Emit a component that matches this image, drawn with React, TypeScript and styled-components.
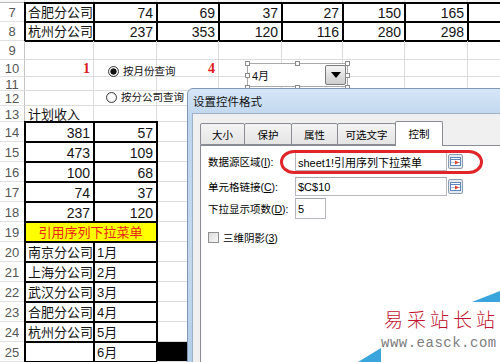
import React from "react";
import styled, { createGlobalStyle } from "styled-components";

const GlobalStyle = createGlobalStyle`
  html, body {
    margin: 0;
    padding: 0;
    background: #fff;
    overflow: hidden;
  }
`;

type Align = "left" | "right" | "center";
type CellSpec = {
  text?: string;
  align?: Align;
  boxed?: boolean;
  span?: number;
  fill?: string;
  tone?: "red" | "mark";
  num?: boolean;
};
type RowSpec = { n: number; h: number; cells: CellSpec[] };

const COLS = [25, 69, 63, 62, 63, 61, 62, 63, 62];

const num = (text: string): CellSpec => ({ text, align: "right", boxed: true, num: true });
const box = (text = ""): CellSpec => ({ text, boxed: true });
const blanks = (count: number): CellSpec[] => Array.from({ length: count }, () => ({}));

const ROWS: RowSpec[] = [
  { n: 7, h: 19, cells: [box("合肥分公司"), num("74"), num("69"), num("37"), num("27"), num("150"), num("165"), box()] },
  { n: 8, h: 19, cells: [box("杭州分公司"), num("237"), num("353"), num("120"), num("116"), num("280"), num("298"), box()] },
  { n: 9, h: 19, cells: blanks(8) },
  {
    n: 10,
    h: 17,
    cells: [
      { text: "1", align: "right", tone: "mark" },
      {},
      { text: "4", align: "right", tone: "mark" },
      ...blanks(5),
    ],
  },
  { n: 11, h: 14, cells: blanks(8) },
  { n: 12, h: 15, cells: blanks(8) },
  { n: 13, h: 16, cells: [{ text: "计划收入" }, ...blanks(7)] },
  { n: 14, h: 20, cells: [num("381"), num("57"), ...blanks(6)] },
  { n: 15, h: 20, cells: [num("473"), num("109"), ...blanks(6)] },
  { n: 16, h: 20, cells: [num("100"), num("68"), ...blanks(6)] },
  { n: 17, h: 20, cells: [num("74"), num("37"), ...blanks(6)] },
  { n: 18, h: 20, cells: [num("237"), num("120"), ...blanks(6)] },
  {
    n: 19,
    h: 20,
    cells: [
      { text: "引用序列下拉菜单", span: 2, boxed: true, fill: "#ffff00", tone: "red", align: "center" },
      ...blanks(6),
    ],
  },
  { n: 20, h: 20, cells: [box("南京分公司"), box("1月"), ...blanks(6)] },
  { n: 21, h: 20, cells: [box("上海分公司"), box("2月"), ...blanks(6)] },
  { n: 22, h: 20, cells: [box("武汉分公司"), box("3月"), ...blanks(6)] },
  { n: 23, h: 20, cells: [box("合肥分公司"), box("4月"), ...blanks(6)] },
  { n: 24, h: 20, cells: [box("杭州分公司"), box("5月"), ...blanks(6)] },
  { n: 25, h: 20, cells: [box(), box("6月"), { fill: "#000" }, ...blanks(5)] },
];

const Page = styled.div`
  position: relative;
  width: 500px;
  height: 362px;
  overflow: hidden;
  background: #fff;
`;

const Sheet = styled.div`
  display: grid;
  grid-template-columns: ${COLS.map((w) => `${w}px`).join(" ")};
  grid-template-rows: 3px ${ROWS.map((r) => `${r.h}px`).join(" ")};
  font-family: "Liberation Sans", "Noto Sans CJK SC", sans-serif;
`;

/* only the bottom edge of the column header strip is still on screen */
const ColHead = styled.div`
  border-right: 1px solid #dadcdd;
  border-bottom: 1px solid #b9b9b9;
  background: #f7f7f7;
`;

const RowHead = styled.div`
  display: flex;
  justify-content: center;
  align-items: center;
  padding-top: 1px;
  border-right: 1px solid #c4c4c4;
  border-bottom: 1px solid #e1e1e1;
  font-size: 13px;
  color: #555;
`;

const Cell = styled.div<{
  $align?: Align;
  $boxed?: boolean;
  $fill?: string;
  $span?: number;
  $tone?: "red" | "mark";
  $num?: boolean;
}>`
  grid-column: span ${(p) => p.$span ?? 1};
  display: flex;
  align-items: center;
  justify-content: ${(p) =>
    p.$align === "right" ? "flex-end" : p.$align === "center" ? "center" : "flex-start"};
  padding: 2px 3px 0 3px;
  border-right: 1px solid #dadcdd;
  border-bottom: 1px solid #dadcdd;
  background: ${(p) => p.$fill ?? "transparent"};
  outline: ${(p) => (p.$boxed ? "2px solid #000" : "none")};
  outline-offset: -1px;
  white-space: nowrap;
  line-height: 16px;
  font-size: ${(p) => (p.$num ? "14px" : "13px")};
  color: ${(p) => (p.$tone ? "#e8221b" : "#141414")};
  ${(p) =>
    p.$tone === "mark" &&
    `font-family: "Liberation Serif", serif; font-weight: 700; font-size: 14px; color: #e0191b;`}
`;

const Radio = styled.div<{ $x: number; $y: number }>`
  position: absolute;
  left: ${(p) => p.$x}px;
  top: ${(p) => p.$y}px;
  display: flex;
  align-items: center;
  gap: 4px;
  font-family: "Noto Sans CJK SC", sans-serif;
  font-size: 10.5px;
  line-height: 12px;
  color: #111;
`;

const RadioDot = styled.span<{ $on?: boolean }>`
  width: 11px;
  height: 11px;
  box-sizing: border-box;
  border-radius: 50%;
  border: 1px solid #3a3a3a;
  background: ${(p) =>
    p.$on
      ? "radial-gradient(circle, #111 0 2.8px, #f4f4f4 3.4px, #dcdcdc 100%)"
      : "radial-gradient(circle, #fff 0, #fff 40%, #e2e2e2 100%)"};
`;

const Combo = styled.div`
  position: absolute;
  left: 247px;
  top: 63px;
  width: 101px;
  height: 24px;
  box-sizing: border-box;
  display: flex;
  align-items: center;
  border: 1px solid #a9a9a9;
  background: #fff;
  font-family: "Liberation Sans", "Noto Sans CJK SC", sans-serif;
  font-size: 11px;
`;

const ComboText = styled.span`
  flex: 1;
  padding-left: 4px;
  color: #111;
`;

const DropButton = styled.span`
  width: 21px;
  height: 20px;
  margin-right: 1px;
  box-sizing: border-box;
  display: flex;
  align-items: center;
  justify-content: center;
  border: 1px solid #7b7b7b;
  border-radius: 2px;
  background: linear-gradient(#f6f6f6, #dedede 55%, #cfcfcf);
`;

const Triangle = styled.span`
  width: 0;
  height: 0;
  border-left: 5px solid transparent;
  border-right: 5px solid transparent;
  border-top: 6px solid #000;
`;

const Handle = styled.span<{ $x: number; $y: number }>`
  position: absolute;
  left: ${(p) => p.$x}px;
  top: ${(p) => p.$y}px;
  width: 5px;
  height: 5px;
  box-sizing: border-box;
  border: 1px solid #8a8a8a;
  background: #fff;
`;

const Dialog = styled.div`
  position: absolute;
  left: 187px;
  top: 88px;
  width: 340px;
  height: 300px;
  box-sizing: border-box;
  display: flex;
  flex-direction: column;
  padding-left: 4px;
  border: 1px solid #7f97b5;
  border-radius: 6px 0 0 0;
  background: linear-gradient(180deg, #d6e6f7 0, #bed5ee 30px, #c3d8ef 60%, #aecbe8 100%);
  font-family: "Liberation Sans", "Noto Sans CJK SC", sans-serif;
  font-size: 11px;
  color: #000;
`;

const TitleBar = styled.div`
  height: 24px;
  display: flex;
  align-items: center;
  padding-left: 1px;
  font-size: 11.5px;
  color: #111;
`;

const Client = styled.div`
  flex: 1;
  display: flex;
  flex-direction: column;
  padding: 7px 0 0 7px;
  border-top: 1px solid #9fb1c7;
  border-left: 1px solid #9fb1c7;
  background: #f0f0f0;
`;

const TabStrip = styled.div`
  display: flex;
  align-items: flex-end;
  height: 24px;
  padding-left: 1px;
  position: relative;
  z-index: 1;
`;

const Tab = styled.div<{ $w: number; $active?: boolean }>`
  width: ${(p) => p.$w}px;
  height: ${(p) => (p.$active ? 25 : 22)}px;
  box-sizing: border-box;
  margin-left: -1px;
  margin-bottom: ${(p) => (p.$active ? -1 : 0)}px;
  display: flex;
  align-items: center;
  justify-content: center;
  padding-bottom: ${(p) => (p.$active ? 2 : 0)}px;
  border: 1px solid #898c95;
  border-bottom: ${(p) => (p.$active ? "none" : "1px solid #898c95")};
  border-radius: 2px 2px 0 0;
  background: ${(p) => (p.$active ? "#fff" : "linear-gradient(#f4f4f4, #e4e4e4)")};
  font-size: 10.5px;
`;

const Panel = styled.div`
  flex: 1;
  position: relative;
  display: flex;
  flex-direction: column;
  padding: 6px 0 0 7px;
  border: 1px solid #898c95;
  background: #fff;
`;

const FieldRow = styled.div<{ $h: number; $gap: number }>`
  display: flex;
  align-items: center;
  height: ${(p) => p.$h}px;
  margin-top: ${(p) => p.$gap}px;
`;

const FieldLabel = styled.span`
  width: 87px;
  font-size: 10.5px;
  white-space: nowrap;
`;

const Input = styled.div<{ $w: number }>`
  width: ${(p) => p.$w}px;
  height: 100%;
  box-sizing: border-box;
  display: flex;
  align-items: center;
  padding-left: 2px;
  border: 1px solid #b5b8c0;
  border-top-color: #a3a6ae;
  font-size: 11px;
  white-space: nowrap;
`;

const RangeButton = styled.svg`
  margin-left: 1px;
  flex: none;
`;

const CheckRow = styled.div`
  display: flex;
  align-items: center;
  gap: 4px;
  margin-top: 11px;
  font-size: 10.5px;
`;

const CheckBox = styled.span`
  width: 11px;
  height: 11px;
  box-sizing: border-box;
  border: 1px solid #8e8f8f;
  background: linear-gradient(135deg, #dcdcdc, #f7f7f7);
`;

const Callout = styled.div`
  position: absolute;
  left: 79px;
  top: 4px;
  width: 203px;
  height: 24px;
  box-sizing: border-box;
  border: 3px solid #e0242a;
  border-radius: 14px / 12px;
`;

const Watermark = styled.div`
  position: absolute;
  left: 356px;
  top: 286px;
  width: 144px;
  height: 76px;
`;

const WatermarkArt = styled.svg`
  position: absolute;
  inset: 0;
`;

const WatermarkText = styled.div`
  position: relative;
  display: flex;
  flex-direction: column;
  padding: 21px 0 0 28px;
`;

const BrandName = styled.span`
  font-family: "Noto Sans CJK SC", sans-serif;
  font-weight: 300;
  font-size: 19px;
  line-height: 24px;
  letter-spacing: 4px;
  color: #c3142f;
`;

const BrandUrl = styled.span`
  margin: 5px 0 0 -3px;
  font-family: "Liberation Mono", monospace;
  font-size: 14px;
  line-height: 14px;
  letter-spacing: 0.5px;
  color: #7d7d7d;
`;

const RangeIcon = () => (
  <RangeButton width="15" height="15" viewBox="0 0 15 15">
    <rect x="0.5" y="0.5" width="14" height="14" rx="1.5" fill="#e3e9f1" stroke="#8e9cae" />
    <rect x="2.5" y="3.5" width="10" height="8" fill="#fff" stroke="#5d86bd" />
    <line x1="3" y1="5.5" x2="12" y2="5.5" stroke="#5d86bd" />
    <line x1="3" y1="8.5" x2="12" y2="8.5" stroke="#a9c0df" />
    <polygon points="7,6.5 11,8.5 7,10.5" fill="#e0412a" />
  </RangeButton>
);

const TABS = [
  { label: "大小", w: 45 },
  { label: "保护", w: 48 },
  { label: "属性", w: 47 },
  { label: "可选文字", w: 59 },
  { label: "控制", w: 48, active: true },
];

const HANDLES = [
  [-3, -3],
  [47, -3],
  [97, -3],
  [-3, 9],
  [97, 9],
  [-3, 21],
  [47, 21],
  [97, 21],
];

export default function App() {
  return (
    <Page>
      <GlobalStyle />
      <Sheet>
        {COLS.map((_, i) => (
          <ColHead key={`h${i}`} />
        ))}
        {ROWS.map((row) => (
          <React.Fragment key={row.n}>
            <RowHead>{row.n}</RowHead>
            {row.cells.map((c, i) => (
              <Cell
                key={i}
                $align={c.align}
                $boxed={c.boxed}
                $fill={c.fill}
                $span={c.span}
                $tone={c.tone}
                $num={c.num}
              >
                {c.text}
              </Cell>
            ))}
          </React.Fragment>
        ))}
      </Sheet>

      <Radio $x={108} $y={65}>
        <RadioDot $on />
        按月份查询
      </Radio>
      <Radio $x={106} $y={91}>
        <RadioDot />
        按分公司查询
      </Radio>

      <Combo>
        <ComboText>4月</ComboText>
        <DropButton>
          <Triangle />
        </DropButton>
        {HANDLES.map(([x, y], i) => (
          <Handle key={i} $x={x} $y={y} />
        ))}
      </Combo>

      <Dialog>
        <TitleBar>设置控件格式</TitleBar>
        <Client>
          <TabStrip>
            {TABS.map((t) => (
              <Tab key={t.label} $w={t.w} $active={t.active}>
                {t.label}
              </Tab>
            ))}
          </TabStrip>
          <Panel>
            <FieldRow $h={19} $gap={0}>
              <FieldLabel>
                数据源区域(<u>I</u>):
              </FieldLabel>
              <Input $w={152}>sheet1!引用序列下拉菜单</Input>
              <RangeIcon />
            </FieldRow>
            <FieldRow $h={19} $gap={6}>
              <FieldLabel>
                单元格链接(<u>C</u>):
              </FieldLabel>
              <Input $w={152}>$C$10</Input>
              <RangeIcon />
            </FieldRow>
            <FieldRow $h={21} $gap={2}>
              <FieldLabel>
                下拉显示项数(<u>D</u>):
              </FieldLabel>
              <Input $w={31}>5</Input>
            </FieldRow>
            <CheckRow>
              <CheckBox />
              <span>
                三维阴影(<u>3</u>)
              </span>
            </CheckRow>
            <Callout />
          </Panel>
        </Client>
      </Dialog>

      <Watermark>
        <WatermarkArt width="144" height="76" viewBox="0 0 144 76">
          <polygon points="116,16 144,5 144,16" fill="#3aa5dc" />
          <polygon points="2,76 25,62 25,76" fill="#3aa5dc" />
        </WatermarkArt>
        <WatermarkText>
          <BrandName>易采站长站</BrandName>
          <BrandUrl>www.easck.com</BrandUrl>
        </WatermarkText>
      </Watermark>
    </Page>
  );
}
